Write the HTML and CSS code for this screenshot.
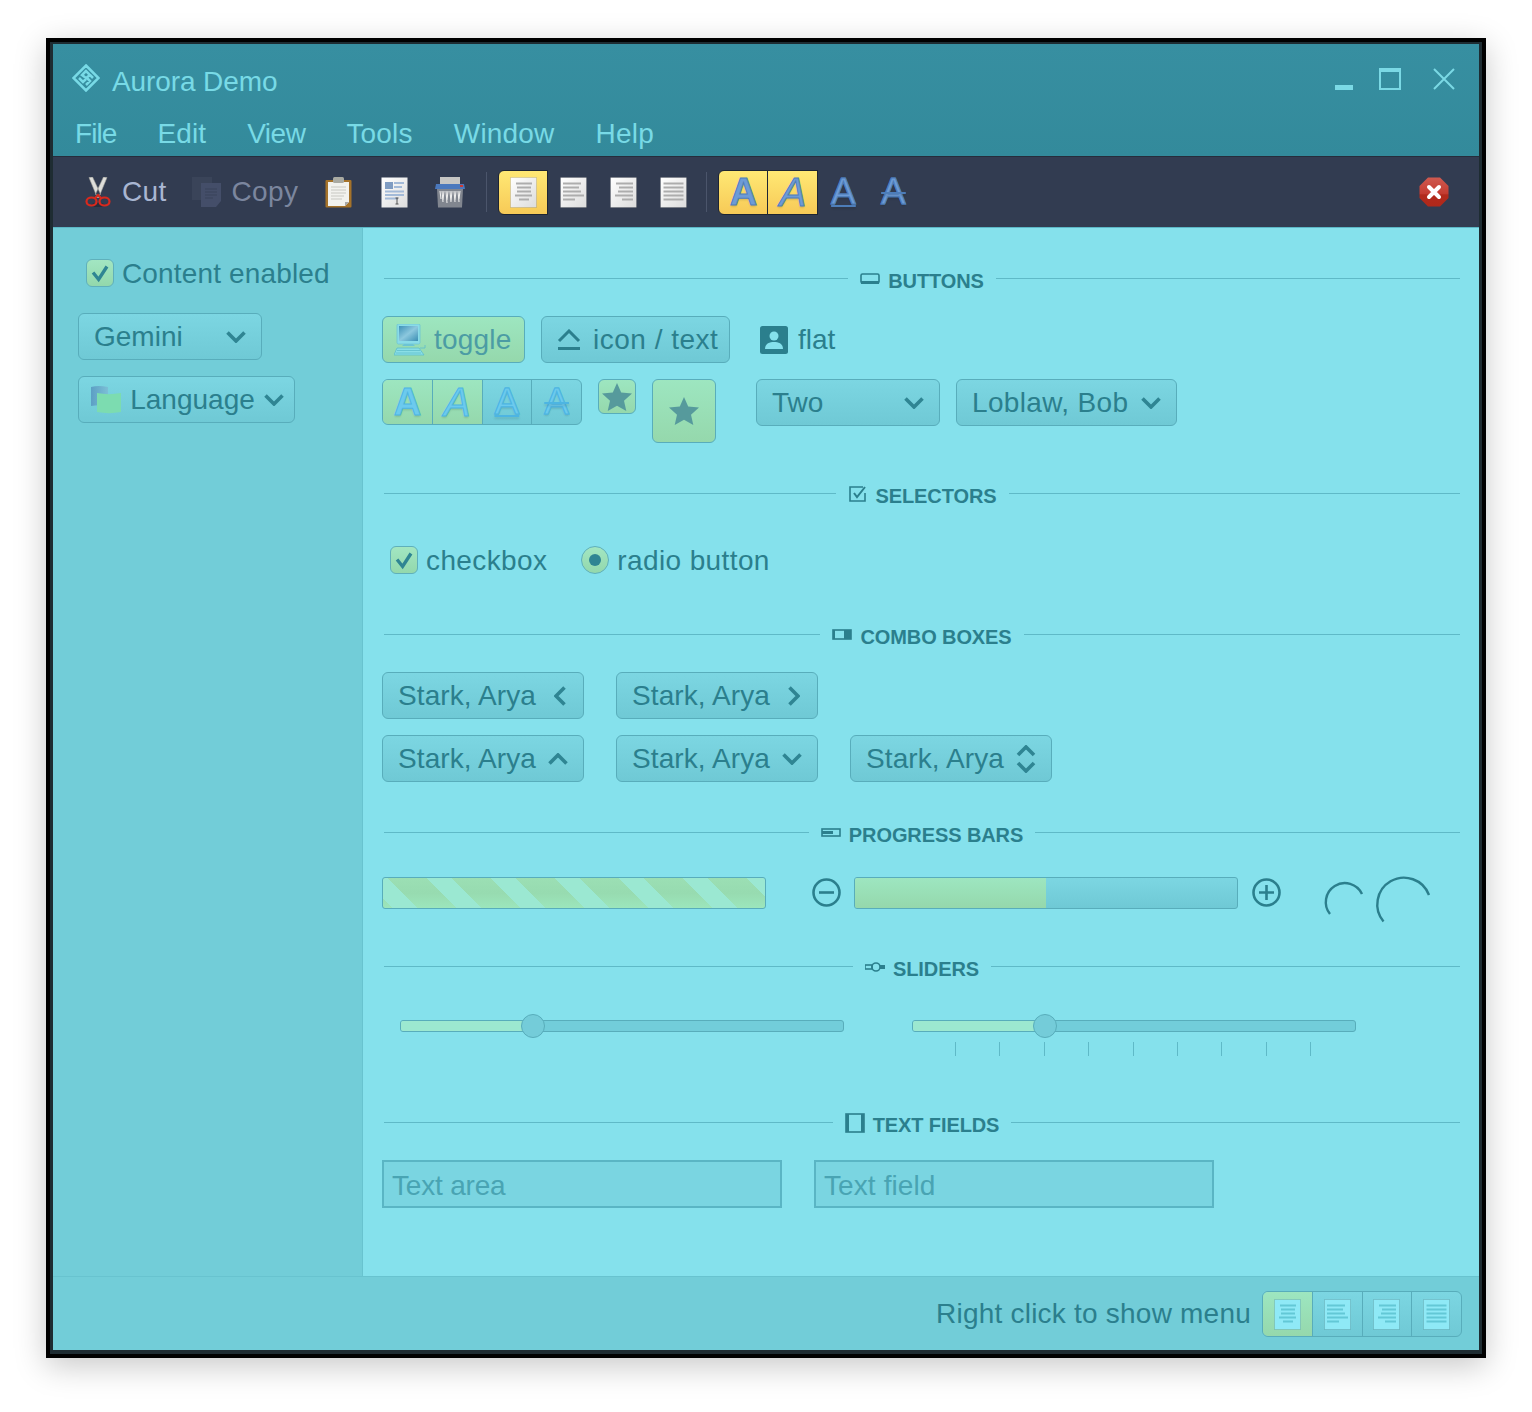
FILE: index.html
```html
<!DOCTYPE html>
<html>
<head lang="en">
    <meta charset="UTF-8">
    <title>Aurora Demo</title>
    <link rel="stylesheet" href="styles.css">
</head>
<body>
<svg class="defs" aria-hidden="true">
    <defs>
        <linearGradient id="paper" x1="0" y1="0" x2="1" y2="1"><stop offset="0" stop-color="#fff"/><stop offset="1" stop-color="#dcdcdc"/></linearGradient>
        <linearGradient id="closeg" x1="0" y1="0" x2="0" y2="1"><stop offset="0" stop-color="#cf5a50"/><stop offset=".55" stop-color="#c43c31"/><stop offset=".6" stop-color="#b22a1c"/><stop offset="1" stop-color="#b0281a"/></linearGradient>
        <linearGradient id="screen" x1="0" y1="0" x2="1" y2="1"><stop offset="0" stop-color="#3f93b8"/><stop offset=".5" stop-color="#8cc8de"/><stop offset="1" stop-color="#3b8fb4"/></linearGradient>
        <linearGradient id="flagback" x1="0" y1="0" x2="1" y2="0"><stop offset="0" stop-color="#5c9fc4"/><stop offset="1" stop-color="#7cbfd6"/></linearGradient>
        <symbol id="doc-center" viewBox="0 0 27 31"><rect class="page" x=".5" y=".5" width="26" height="30"/><path class="rule" d="M6 6.500h16M7 10.500h14M7 14.500h14M5 18.500h17M9 22.500h10"/></symbol>
        <symbol id="doc-left" viewBox="0 0 27 31"><rect class="page" x=".5" y=".5" width="26" height="30"/><path class="rule" d="M3 6.500h18M3 10.500h16M3 14.500h18M3 18.500h21M3 22.500h12"/></symbol>
        <symbol id="doc-right" viewBox="0 0 27 31"><rect class="page" x=".5" y=".5" width="26" height="30"/><path class="rule" d="M6 6.500h17M9 10.500h14M8 14.500h15M5 18.500h18M12 22.500h11"/></symbol>
        <symbol id="doc-fill" viewBox="0 0 27 31"><rect class="page" x=".5" y=".5" width="26" height="30"/><path class="rule" d="M3.500 6.500h20M3.500 10.500h20M3.500 14.500h20M3.500 18.500h20M3.500 22.500h20"/></symbol>
        <symbol id="star" viewBox="0 0 30 28"><path d="M15 0l4.200 9.600L30 10.600l-8 7.100L24.300 28 15 22.700 5.700 28 8 17.700 0 10.600l10.800-1z"/></symbol>
        <symbol id="chev-down" viewBox="0 0 20 12"><path class="chev" d="M1.500 1.500L10 10l8.500-8.500"/></symbol>
        <symbol id="chev-up" viewBox="0 0 20 12"><path class="chev" d="M1.500 10.500L10 2l8.500 8.500"/></symbol>
        <symbol id="chev-left" viewBox="0 0 12 20"><path class="chev" d="M10.500 1.500L2 10l8.500 8.500"/></symbol>
        <symbol id="chev-right" viewBox="0 0 12 20"><path class="chev" d="M1.500 1.500L10 10l-8.500 8.500"/></symbol>
        <symbol id="tick" viewBox="0 0 28 28"><path class="chev" d="M6.500 13.500l6 7.500 9-14"/></symbol>
    </defs>
</svg>

<div class="window">
<div class="frame">

    <div class="titlearea">
        <div class="titlebar">
            <svg class="logo" viewBox="0 0 28 28"><path d="M14 1.500L26.500 14 14 26.500 1.500 14z M14 7l-4 4 4 3 4-3z M7 14l4 4 3-3M14 21l4-4-3-3M21 14l-3-3" /></svg>
            <span class="apptitle">Aurora Demo</span>
            <div class="winbtns">
                <span class="win-min"></span>
                <span class="win-max"></span>
                <svg class="win-close" viewBox="0 0 22 22"><path d="M1 1l20 20M21 1L1 21"/></svg>
            </div>
        </div>
        <ul class="menubar">
            <li>File</li><li>Edit</li><li>View</li><li>Tools</li><li>Window</li><li>Help</li>
        </ul>
    </div>

    <div class="toolbar">
        <div class="tool tool-text">
            <svg class="ico-cut" viewBox="0 0 26 30">
                <ellipse cx="13" cy="28" rx="7" ry="2" fill="#262d3c"/>
                <path d="M4 0.500l3.500-.5L15.500 17l-3 4zM22 .5L18.500 0 10.500 17l3 4z" fill="#dededa" stroke="#a8a8a0" stroke-width=".6"/>
                <ellipse cx="6.500" cy="24.500" rx="5" ry="4" fill="none" stroke="#d8291d" stroke-width="2.200"/>
                <ellipse cx="19.500" cy="24.500" rx="5" ry="4" fill="none" stroke="#d8291d" stroke-width="2.200"/>
                <path d="M10 21l3-3 3 3" fill="none" stroke="#d8291d" stroke-width="2.200"/>
            </svg>
            <span class="cut-label">Cut</span>
        </div>
        <div class="tool tool-text">
            <svg class="ico-copy" viewBox="0 0 30 30">
                <rect x="0" y="0" width="20" height="23" fill="#3a4459"/>
                <path d="M9 6h20v18l-5 6H9z" fill="#444e69"/>
                <path d="M13 12h12M13 15h12M13 18h12M13 21h8" stroke="#39425a" stroke-width="1"/>
            </svg>
            <span class="copy-label">Copy</span>
        </div>
        <div class="tool">
            <svg class="ico-clip" viewBox="0 0 27 31">
                <rect x=".5" y="3" width="26" height="27.500" rx="1" fill="#a5732a"/>
                <path d="M3 5h21v20l-4 4H3z" fill="#f2f2ee"/>
                <path d="M20 29l4-4h-4z" fill="#a8a8a8"/>
                <rect x="8" y="0" width="11" height="6" rx="1.500" fill="#a9aaa2"/>
                <path d="M6 10h15M6 13h15M6 16h15M6 19h13M6 22h11" stroke="#c8c8c2" stroke-width="1"/>
            </svg>
        </div>
        <div class="tool">
            <svg class="ico-form" viewBox="0 0 27 31">
                <rect x=".5" y=".5" width="26" height="30" fill="url(#paper)"/>
                <rect x="4" y="5" width="8" height="7" fill="#7f9cc2"/>
                <path d="M13 6h10M13 10h8M4 14.500h19M4 18h19M4 21.500h13" stroke="#a3bad8" stroke-width="2"/>
                <path d="M16 21v6M14.500 21h3M14.500 27h3" stroke="#555" stroke-width="1"/>
            </svg>
        </div>
        <div class="tool">
            <svg class="ico-shred" viewBox="0 0 30 31">
                <rect x="5" y="0" width="20" height="8" fill="#c6c6c4"/>
                <path d="M1 7h28l1 5H0z" fill="#4a78bd"/>
                <rect x="25" y="8" width="3" height="2" fill="#d03a30"/>
                <path d="M2 12h26l-1 18.500H3z" fill="#81868f"/>
                <path d="M5 14l1 8M7 14l1 11M9 14l-1 9M11 14l1 12M13 14l-1 9M15 14l1 11M17 14l-1 10M19 14l1 11M21 14l-1 9M23 14l1 11M25 14l-1 8" stroke="#ececec" stroke-width="1.100"/>
            </svg>
        </div>
        <span class="tsep"></span>
        <div class="tool-w on first"><svg class="doc"><use href="#doc-center"/></svg></div>
        <div class="tool-w"><svg class="doc"><use href="#doc-left"/></svg></div>
        <div class="tool-w"><svg class="doc"><use href="#doc-right"/></svg></div>
        <div class="tool-w"><svg class="doc"><use href="#doc-fill"/></svg></div>
        <span class="tsep tsep2"></span>
        <div class="tool-w on first"><span class="glyph g-bold">A</span></div>
        <div class="tool-w on"><span class="glyph g-ital">A</span></div>
        <div class="tool-w"><span class="glyph g-und">A</span></div>
        <div class="tool-w"><span class="glyph g-str">A</span></div>
        <svg class="ico-stop" viewBox="0 0 30 30">
            <path d="M9 .5h12L29.500 9v12L21 29.500H9L.5 21V9z" fill="url(#closeg)"/>
            <path d="M10 10l10 10M20 10L10 20" stroke="#fff" stroke-width="4" stroke-linecap="round"/>
        </svg>
    </div>

    <div class="content">
        <div class="sidebar">
            <label class="check side-check"><span class="box"><svg><use href="#tick"/></svg></span>Content enabled</label>
            <div class="btn combo side-gemini"><span>Gemini</span><svg class="chev-h"><use href="#chev-down"/></svg></div>
            <div class="btn combo side-lang">
                <svg class="ico-lang" viewBox="0 0 30 28">
                    <path d="M0 1c6-1.500 11-1 17 0v19c-6-1-11-1-17 0z" fill="url(#flagback)"/>
                    <path d="M6 7c8 1.500 16 1.500 24 0v19c-8 1.500-16 1.500-24 0z" fill="#7cdcb0"/>
                </svg>
                <span>Language</span>
                <svg class="chev-h"><use href="#chev-down"/></svg>
            </div>
        </div>

        <div class="main">
            <section class="section s-buttons">
                <div class="legend">
                    <span class="rule-line"></span>
                    <svg class="lg-ico" viewBox="0 0 20 20"><rect x="1" y="5" width="18" height="9" rx="1.500"/><path class="lg-solid" d="M1 12h18v3H1z"/></svg>
                    <span class="lg-text">BUTTONS</span>
                    <span class="rule-line"></span>
                </div>
                <div class="row r-first">
                    <div class="btn on b-toggle">
                        <svg class="ico-pc" viewBox="0 0 32 32">
                            <rect x="3" y="0" width="23" height="20" rx="1.500" fill="#8adce8" stroke="#6cc4d4" stroke-width=".8"/>
                            <rect x="5" y="2" width="19" height="15" fill="url(#screen)"/>
                            <path d="M10 20h9l2 2H8z" fill="#6cc4d4"/>
                            <path d="M3 24h22l5 7H0z" fill="#8adfe6" stroke="#5ebdcc" stroke-width=".8"/>
                            <path d="M3 26.500h23M2 29h25" stroke="#5ebdcc" stroke-width=".8"/>
                            <path d="M26 24h5v-3" fill="none" stroke="#5ebdcc" stroke-width=".8"/>
                        </svg>
                        <span>toggle</span>
                    </div>
                    <div class="btn b-icon">
                        <svg class="ico-eject" viewBox="0 0 24 22"><path d="M2 12L12 2l10 10" fill="none"/><path class="lg-solid" d="M1 18h22v3H1z"/></svg>
                        <span>icon / text</span>
                    </div>
                    <div class="flat">
                        <svg class="ico-user" viewBox="0 0 28 28">
                            <rect width="28" height="28" rx="2.500" fill="#2b7f8d"/>
                            <circle cx="14" cy="10" r="4.500" fill="#85e1ec"/>
                            <path d="M5 23c0-6 5-7 9-7s9 1 9 7z" fill="#85e1ec"/>
                        </svg>
                        <span>flat</span>
                    </div>
                </div>
                <div class="row r-second">
                    <div class="seg">
                        <div class="seg-item on"><span class="glyph g-bold">A</span></div>
                        <div class="seg-item on"><span class="glyph g-ital">A</span></div>
                        <div class="seg-item"><span class="glyph g-und">A</span></div>
                        <div class="seg-item"><span class="glyph g-str">A</span></div>
                    </div>
                    <div class="btn on star-s"><svg class="star"><use href="#star"/></svg></div>
                    <div class="btn on star-l"><svg class="star"><use href="#star"/></svg></div>
                    <div class="btn combo c-two"><span>Two</span><svg class="chev-h"><use href="#chev-down"/></svg></div>
                    <div class="btn combo c-bob"><span>Loblaw, Bob</span><svg class="chev-h"><use href="#chev-down"/></svg></div>
                </div>
            </section>

            <section class="section s-selectors">
                <div class="legend">
                    <span class="rule-line"></span>
                    <svg class="lg-ico" viewBox="0 0 20 20"><path d="M17 9v8H2V3h13"/><path d="M6 9l3 4 8-10" stroke-width="2"/></svg>
                    <span class="lg-text">SELECTORS</span>
                    <span class="rule-line"></span>
                </div>
                <div class="row r-selectors">
                    <label class="check"><span class="box"><svg><use href="#tick"/></svg></span>checkbox</label>
                    <label class="check"><span class="radio"><span class="dot"></span></span>radio button</label>
                </div>
            </section>

            <section class="section s-combos">
                <div class="legend">
                    <span class="rule-line"></span>
                    <svg class="lg-ico" viewBox="0 0 20 20"><rect x="1" y="5" width="18" height="9"/><path class="lg-solid" d="M1 5h2v9H1zM12 5h7v9h-7z"/></svg>
                    <span class="lg-text">COMBO BOXES</span>
                    <span class="rule-line"></span>
                </div>
                <div class="row r-first">
                    <div class="btn combo c-arya"><span>Stark, Arya</span><svg class="chev-v"><use href="#chev-left"/></svg></div>
                    <div class="btn combo c-arya"><span>Stark, Arya</span><svg class="chev-v"><use href="#chev-right"/></svg></div>
                </div>
                <div class="row">
                    <div class="btn combo c-arya"><span>Stark, Arya</span><svg class="chev-h"><use href="#chev-up"/></svg></div>
                    <div class="btn combo c-arya"><span>Stark, Arya</span><svg class="chev-h"><use href="#chev-down"/></svg></div>
                    <div class="btn combo c-arya">
                        <span>Stark, Arya</span>
                        <svg class="chev-ud" viewBox="0 0 20 28"><path class="chev" d="M2 10l8-8 8 8M2 18l8 8 8-8"/></svg>
                    </div>
                </div>
            </section>

            <section class="section s-progress">
                <div class="legend">
                    <span class="rule-line"></span>
                    <svg class="lg-ico" viewBox="0 0 20 20"><rect x="1" y="6" width="18" height="7"/><path class="lg-solid" d="M1 8h11v3H1z"/></svg>
                    <span class="lg-text">PROGRESS BARS</span>
                    <span class="rule-line"></span>
                </div>
                <div class="row r-bars">
                    <div class="bar stripes"></div>
                    <svg class="ico-zoom minus" viewBox="0 0 29 29"><circle cx="14.500" cy="14.500" r="13"/><path d="M7 14.500h15"/></svg>
                    <div class="bar track"><div class="bar-fill"></div></div>
                    <svg class="ico-zoom plus" viewBox="0 0 29 29"><circle cx="14.500" cy="14.500" r="13"/><path d="M7 14.500h15M14.500 7v15"/></svg>
                    <svg class="spin spin-s" viewBox="0 0 42 44"><path d="M39 16A19 19 0 1 0 7 36"/></svg>
                    <svg class="spin spin-l" viewBox="0 0 60 48"><path d="M55 18A26.700 26.700 0 1 0 9.500 44.500"/></svg>
                </div>
            </section>

            <section class="section s-sliders">
                <div class="legend">
                    <span class="rule-line"></span>
                    <svg class="lg-ico" viewBox="0 0 20 20"><rect x="0" y="8" width="7" height="4"/><circle cx="11" cy="10" r="4"/><rect x="15" y="8" width="5" height="4" class="lg-solid"/></svg>
                    <span class="lg-text">SLIDERS</span>
                    <span class="rule-line"></span>
                </div>
                <div class="row r-sliders">
                    <div class="slider">
                        <div class="slide-track"><div class="slide-fill"></div></div>
                        <span class="thumb"></span>
                    </div>
                    <div class="slider">
                        <div class="slide-track"><div class="slide-fill"></div></div>
                        <span class="thumb"></span>
                        <div class="ticks"><i></i><i></i><i></i><i></i><i></i><i></i><i></i><i></i><i></i></div>
                    </div>
                </div>
            </section>

            <section class="section s-fields">
                <div class="legend">
                    <span class="rule-line"></span>
                    <svg class="lg-ico" viewBox="0 0 20 20"><rect x="1" y="1" width="18" height="18"/><path class="lg-solid" d="M1 1h3v18H1zM16 1h3v18h-3z"/></svg>
                    <span class="lg-text">TEXT FIELDS</span>
                    <span class="rule-line"></span>
                </div>
                <div class="row r-first">
                    <div class="field">Text area</div>
                    <div class="field">Text field</div>
                </div>
            </section>
        </div>
    </div>

    <div class="statusbar">
        <span class="status-text">Right click to show menu</span>
        <div class="seg seg-status">
            <div class="seg-item on"><svg class="doc"><use href="#doc-center"/></svg></div>
            <div class="seg-item"><svg class="doc"><use href="#doc-left"/></svg></div>
            <div class="seg-item"><svg class="doc"><use href="#doc-right"/></svg></div>
            <div class="seg-item"><svg class="doc"><use href="#doc-fill"/></svg></div>
        </div>
    </div>

</div>
</div>
</body>
</html>
```

FILE: styles.css
```css
* {
    margin: 0;
    padding: 0;
    box-sizing: border-box;
}
ul {
    list-style: none;
}
html, body {
    height: 1412px;
    overflow: hidden;
}
body {
    padding: 38px 46px;
    background: #fff;
    font-family: "Liberation Sans", Arial, sans-serif;
    font-size: 28px;
    color: #2b7f8d;
}
.defs {
    position: absolute;
    width: 0;
    height: 0;
}

/* window frame */
.window {
    width: 1440px;
    height: 1320px;
    border: 4px solid #000;
    box-shadow: 0 8px 30px rgba(0, 0, 0, .22);
}
.frame {
    height: 100%;
    border-style: solid;
    border-color: #1e2c32;
    border-width: 2px 3px 4px 3px;
    display: flex;
    flex-direction: column;
}

/* title + menu */
.titlearea {
    height: 112px;
    background: linear-gradient(#378fa1, #338a9b);
    color: #78dae6;
}
.titlebar {
    height: 74px;
    padding: 18px 24px 0 19px;
    display: flex;
    align-items: flex-start;
}
.logo {
    width: 28px;
    height: 28px;
    margin-top: 2px;
    fill: none;
    stroke: #78dae6;
    stroke-width: 2.500;
}
.apptitle {
    margin-left: 12px;
    margin-top: 3px;
    line-height: 34px;
    letter-spacing: -.1px;
}
.winbtns {
    margin-left: auto;
    display: flex;
    align-items: flex-end;
    gap: 26px;
    height: 28px;
    padding-top: 6px;
}
.win-min {
    width: 18px;
    height: 5px;
    background: #7bd9e5;
}
.win-max {
    width: 22px;
    height: 22px;
    margin-right: 6px;
    border: 2px solid #7bd9e5;
    border-top-width: 4px;
}
.win-close {
    width: 22px;
    height: 22px;
    fill: none;
    stroke: #7bd9e5;
    stroke-width: 2;
}
.menubar {
    display: flex;
    gap: 41px;
    padding-left: 22px;
    line-height: 32px;
    letter-spacing: .2px;
}
.menubar li:first-child {
    letter-spacing: -.9px;
}
.menubar li:nth-child(2) {
    letter-spacing: .1px;
}
.menubar li:nth-child(3) {
    letter-spacing: -.5px;
}

/* toolbar */
.toolbar {
    height: 71px;
    background: #323c51;
    border-top: 1px solid #262d3c;
    display: flex;
    align-items: center;
    padding-left: 32px;
    padding-right: 30px;
}
.tool {
    width: 56px;
    display: flex;
    justify-content: center;
}
.tool-text {
    width: auto;
    align-items: center;
    margin-right: 26px;
}
.tool-text + .tool-text {
    margin-right: 12px;
}
.ico-cut {
    width: 26px;
    height: 30px;
    margin-right: 11px;
}
.cut-label {
    color: #a9b6d2;
    letter-spacing: .3px;
}
.ico-copy {
    width: 30px;
    height: 30px;
    margin-right: 9px;
}
.copy-label {
    color: #7b869e;
    letter-spacing: .4px;
}
.ico-clip, .ico-form {
    width: 27px;
    height: 31px;
}
.ico-shred {
    width: 30px;
    height: 31px;
}
.tsep {
    width: 1px;
    height: 40px;
    background: #4b556b;
    margin-left: 8px;
    margin-right: 11px;
}
.tool-w {
    width: 50px;
    height: 45px;
    display: flex;
    align-items: center;
    justify-content: center;
}
.tool-w.on {
    background: linear-gradient(#ffe874, #f7ca57);
    border: 1px solid #1e2533;
    border-left-width: 0;
}
.tool-w.first {
    border-left-width: 1px;
    border-radius: 6px 0 0 6px;
}
.doc {
    width: 27px;
    height: 31px;
    --page: url(#paper);
    --line: #adadad;
}
.page {
    fill: var(--page);
    stroke: rgba(0, 0, 0, .12);
    stroke-width: 1;
}
.rule {
    fill: none;
    stroke: var(--line);
    stroke-width: 1.800;
}
.glyph {
    font-size: 38px;
    line-height: 38px;
    font-weight: bold;
    color: #6d9bd6;
    -webkit-text-stroke: 1px #4d7db9;
    text-shadow: 0 2px 2px rgba(0, 0, 0, .12);
}
.g-ital {
    font-style: italic;
    font-weight: normal;
    font-size: 40px;
}
.g-und {
    font-weight: normal;
    text-decoration: underline;
    text-decoration-thickness: 2px;
    text-underline-offset: 1px;
    font-size: 37px;
}
.g-str {
    font-weight: normal;
    font-size: 37px;
    text-decoration: line-through;
    text-decoration-thickness: 2px;
}
.ico-stop {
    width: 30px;
    height: 30px;
    margin-left: auto;
}

/* content */
.content {
    height: 1049px;
    display: flex;
    border-top: 1px solid #5cb7c6;
}
.sidebar {
    width: 310px;
    background: #72cdd8;
    border-right: 1px solid #68c3cf;
    padding: 31px 0 0 25px;
    display: flex;
    flex-direction: column;
    align-items: flex-start;
}
.main {
    flex: 1;
    background: #85e1ec;
    padding: 38px 19px 0 19px;
}
.check {
    display: flex;
    align-items: flex-start;
    gap: 8px;
    height: 28px;
    line-height: 30px;
    letter-spacing: .15px;
}
.side-check {
    margin-left: 8px;
    margin-bottom: 26px;
}
.r-selectors .check {
    letter-spacing: .38px;
}
.box {
    width: 28px;
    height: 28px;
    border: 1px solid #5fb0bb;
    border-radius: 6px;
    background: linear-gradient(#a2e6c2, #93d8ac);
}
.box svg {
    display: block;
    width: 26px;
    height: 26px;
}
.chev {
    fill: none;
    stroke: #2f8593;
    stroke-width: 3.600;
}
.radio {
    width: 28px;
    height: 28px;
    border: 1px solid #5fb0bb;
    border-radius: 50%;
    background: linear-gradient(#a2e6c2, #93d8ac);
    display: flex;
    align-items: center;
    justify-content: center;
}
.dot {
    width: 12px;
    height: 12px;
    border-radius: 50%;
    background: #2f8593;
}

/* buttons */
.btn {
    height: 47px;
    border: 1px solid #58adbb;
    border-radius: 6px;
    background: linear-gradient(#7cd6e2, #6fc9d5);
    display: flex;
    align-items: center;
}
.btn.on {
    background: linear-gradient(#9de6c0, #95d8ac);
}
.combo {
    justify-content: space-between;
    padding: 0 15px;
}
.chev-h {
    width: 20px;
    height: 12px;
}
.chev-v {
    width: 12px;
    height: 20px;
    margin-right: 2px;
}
.chev-ud {
    width: 20px;
    height: 28px;
}
.side-gemini {
    width: 184px;
    margin-bottom: 16px;
}
.side-lang {
    width: 217px;
    padding-left: 12px;
    padding-right: 10px;
}
.ico-lang {
    width: 30px;
    height: 28px;
}

/* sections */
.section {
    padding: 0 1px;
}
.s-buttons { height: 215px; }
.s-selectors { height: 141px; }
.s-combos { height: 198px; }
.s-progress { height: 134px; }
.s-sliders { height: 156px; }
.legend {
    height: 24px;
    margin: 0 -1px;
    padding: 0 0 0 2px;
    display: flex;
    align-items: center;
}
.rule-line {
    flex: 1;
    height: 1px;
    background: #5fb9c7;
}
.lg-ico {
    width: 20px;
    height: 20px;
    margin-left: 12px;
    margin-right: 8px;
    margin-top: 2px;
    fill: none;
    stroke: #2b7f8d;
    stroke-width: 1.600;
}
.lg-solid {
    fill: #2b7f8d;
    stroke: none;
}
.lg-text {
    font-size: 20px;
    font-weight: bold;
    letter-spacing: -.1px;
    margin-right: 12px;
    margin-top: 6px;
}
.row {
    display: flex;
    gap: 16px;
    margin-left: -1px;
}
.r-first {
    padding-top: 26px;
    margin-bottom: 16px;
}
.r-second {
    align-items: flex-start;
}

.b-toggle {
    width: 143px;
    padding-left: 11px;
    gap: 8px;
    color: #4c9ca4;
    letter-spacing: .2px;
}
.ico-pc {
    width: 32px;
    height: 32px;
}
.b-icon {
    width: 189px;
    padding-left: 15px;
    gap: 12px;
    letter-spacing: .5px;
}
.ico-eject {
    width: 24px;
    height: 22px;
    fill: none;
    stroke: #2b7f8d;
    stroke-width: 3;
}
.flat {
    display: flex;
    align-items: center;
    gap: 10px;
    margin-left: 14px;
}
.ico-user {
    width: 28px;
    height: 28px;
}
.seg {
    width: 200px;
    height: 46px;
    display: flex;
    border: 1px solid #58adbb;
    border-radius: 6px;
    overflow: hidden;
    background: linear-gradient(#7cd6e2, #6fc9d5);
}
.seg-item {
    flex: 1;
    display: flex;
    align-items: center;
    justify-content: center;
    border-left: 1px solid #58adbb;
}
.seg-item:first-child {
    border-left: 0;
}
.seg-item.on {
    background: linear-gradient(#9de6c0, #95d8ac);
}
.seg .glyph {
    color: #6ccaee;
    -webkit-text-stroke-color: #4db5e2;
}
.star {
    width: 30px;
    height: 28px;
    fill: #569a9c;
}
.star-s {
    width: 38px;
    height: 35px;
    justify-content: center;
}
.star-l {
    width: 64px;
    height: 64px;
    justify-content: center;
}
.c-two {
    width: 184px;
    margin-left: 24px;
}
.c-bob {
    width: 221px;
    letter-spacing: .35px;
}

/* selectors */
.r-selectors {
    gap: 34px;
    padding: 41px 0 0 8px;
}

/* combos */
.c-arya {
    width: 202px;
    letter-spacing: .1px;
}
.s-combos .row {
    gap: 32px;
}

/* progress */
.r-bars {
    padding-top: 33px;
    gap: 0;
    align-items: flex-start;
}
.bar {
    width: 384px;
    height: 32px;
    border: 1px solid #58adbb;
    border-radius: 3px;
    overflow: hidden;
}
.stripes {
    background:
        repeating-linear-gradient(45deg, transparent 0, transparent 7px, #9be8d2 7px, #9be8d2 24.700px, transparent 24.700px, transparent 45.250px),
        linear-gradient(#9bdfb4, #97dbb0 50%, #9ce6bc);
}
.track {
    background: linear-gradient(#7cd6e2, #6fc9d5);
    margin: 0 14px 0 13px;
}
.bar-fill {
    width: 50%;
    height: 100%;
    background: linear-gradient(#9de6c0, #95d8ac);
}
.ico-zoom {
    width: 29px;
    height: 29px;
    margin-top: 1px;
    fill: none;
    stroke: #2b7f8d;
    stroke-width: 2.600;
}
.minus {
    margin-left: 46px;
}
.spin {
    fill: none;
    stroke: #2b7f8d;
    stroke-width: 2.400;
    overflow: visible;
}
.spin-s {
    width: 42px;
    height: 44px;
    margin-left: 42px;
    margin-top: 1px;
}
.spin-l {
    width: 60px;
    height: 48px;
    margin-left: 9px;
}

/* sliders */
.r-sliders {
    gap: 68px;
    padding: 36px 0 0 18px;
}
.slider {
    position: relative;
    width: 444px;
    padding-top: 6px;
}
.slide-track {
    height: 12px;
    border: 1px solid #58adbb;
    border-radius: 3px;
    background: #72cdda;
    overflow: hidden;
}
.slide-fill {
    width: 30%;
    height: 100%;
    background: #9ce8d0;
}
.thumb {
    position: absolute;
    left: 121px;
    top: 0;
    width: 24px;
    height: 24px;
    border: 1px solid #58adbb;
    border-radius: 50%;
    background: #74ccd9;
}
.ticks {
    display: flex;
    justify-content: space-between;
    padding: 0 45px 0 43px;
    margin-top: 10px;
}
.ticks i {
    width: 1px;
    height: 14px;
    background: #5fb9c7;
}

/* text fields */
.r-first .field {
    width: 400px;
    height: 48px;
    line-height: 48px;
    border: 2px solid #5ab5c4;
    background: #7ad5e1;
    padding-left: 8px;
    color: #49a4b3;
    letter-spacing: -.2px;
}
.r-first .field + .field {
    letter-spacing: .1px;
}
.s-fields .row {
    gap: 32px;
}

/* status bar */
.statusbar {
    height: 74px;
    background: #72cdd8;
    border-top: 1px solid #68c3cf;
    display: flex;
    align-items: center;
    justify-content: flex-end;
    gap: 11px;
    padding: 1px 17px 0 0;
}
.status-text {
    letter-spacing: .22px;
}
.seg-status .doc {
    --page: #8fe9f6;
    --line: #63c8d6;
}
```
